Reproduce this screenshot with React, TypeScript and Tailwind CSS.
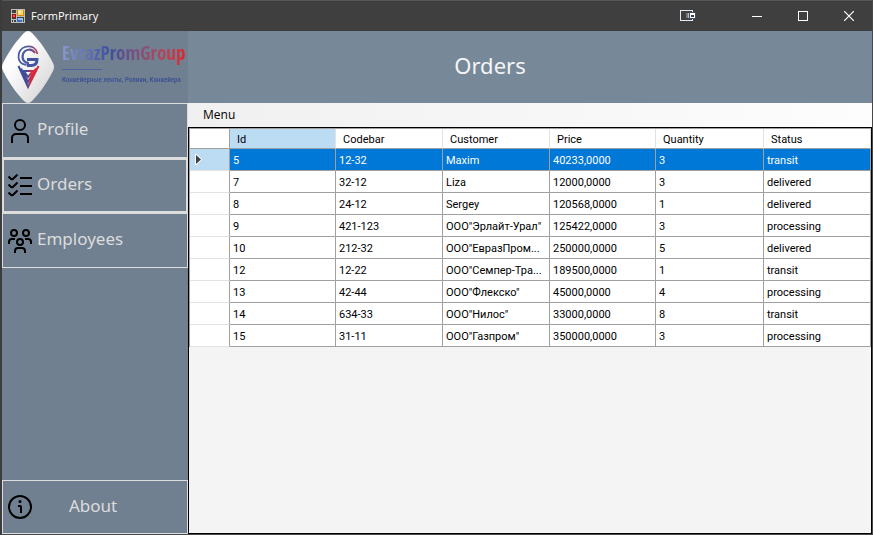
import type { ReactNode } from "react";

const columns = [
  { name: "Id", width: "w-[106px] bg-[#bcdcf4]" },
  { name: "Codebar", width: "w-[107px]" },
  { name: "Customer", width: "w-[107px]" },
  { name: "Price", width: "w-[106px]" },
  { name: "Quantity", width: "w-[108px]" },
  { name: "Status", width: "" },
];

const orders = [
  ["5", "12-32", "Maxim", "40233,0000", "3", "transit"],
  ["7", "32-12", "Liza", "12000,0000", "3", "delivered"],
  ["8", "24-12", "Sergey", "120568,0000", "1", "delivered"],
  ["9", "421-123", 'ООО"Эрлайт-Урал"', "125422,0000", "3", "processing"],
  ["10", "212-32", 'ООО"ЕвразПром...', "250000,0000", "5", "delivered"],
  ["12", "12-22", 'ООО"Семпер-Тра...', "189500,0000", "1", "transit"],
  ["13", "42-44", 'ООО"Флекско"', "45000,0000", "4", "processing"],
  ["14", "634-33", 'ООО"Нилос"', "33000,0000", "8", "transit"],
  ["15", "31-11", 'ООО"Газпром"', "350000,0000", "3", "processing"],
];

function LineIcon({ children }: { children: ReactNode }) {
  return (
    <svg viewBox="0 0 24 24" className="size-6 shrink-0" fill="none" stroke="#000" strokeWidth="2" aria-hidden="true">
      {children}
    </svg>
  );
}

function ProfileIcon() {
  return (
    <LineIcon>
      <circle cx="12" cy="6" r="5" />
      <path d="M4 24v-5a4 4 0 0 1 4-4h8a4 4 0 0 1 4 4v5" />
    </LineIcon>
  );
}

function ChecklistIcon() {
  return (
    <LineIcon>
      <path d="M12 4h12M12 12h12M12 20h12" />
      <path d="M.5 2.500l2.600 2.400q.9.700 1.800 0L9.500.5M.5 10.500l2.600 2.400q.9.700 1.800 0L9.500 8.500M.5 18.500l2.600 2.400q.9.700 1.800 0l4.600-4.400" />
    </LineIcon>
  );
}

function EmployeesIcon() {
  return (
    <LineIcon>
      <circle cx="6" cy="4" r="3" />
      <circle cx="18" cy="4" r="3" />
      <circle cx="12" cy="13" r="3" />
      <path d="M7 24v-2a3 3 0 0 1 3-3h4a3 3 0 0 1 3 3v2" />
      <path d="M1 15v-2a3 3 0 0 1 3-3h3M23 15v-2a3 3 0 0 0-3-3h-3" />
    </LineIcon>
  );
}

function InfoIcon() {
  return (
    <LineIcon>
      <circle cx="12" cy="12" r="11" />
      <path d="M10 11h2a1 1 0 0 1 1 1v6" />
      <circle cx="12" cy="6.500" r="1.500" fill="#000" stroke="none" />
    </LineIcon>
  );
}

function FormIcon() {
  return (
    <svg viewBox="0 0 14 14" className="size-[14px]" shapeRendering="crispEdges" aria-hidden="true">
      <path fill="#bdbdbd" d="M0 0h14v14H0z" />
      <path fill="#3f3f3f" d="M1 1h4v3H1zM1 9h4v1H1zM1 11h1v2H1zM3 11h2v2H3zM6 8h7v1H6zM12 9h1v4h-1z" />
      <path fill="#c98a1c" d="M6 1h7v6H6z" />
      <path fill="#ffd75e" d="M7 1h5v5H7z" />
      <path fill="#fff0a8" d="M7 2h3v2H7z" />
      <path fill="#a01010" d="M1 5h4v4H1z" />
      <path fill="#f0553c" d="M2 6h2v2H2z" />
      <path fill="#3a70c8" d="M6 9h5v4H6z" />
      <path fill="#8cc0ff" d="M7 9h4v2H7z" />
    </svg>
  );
}

function Emblem() {
  return (
    <svg viewBox="0 0 52 72" className="h-[72px] w-[52px] shrink-0" aria-hidden="true">
      <defs>
        <linearGradient id="plate" x1="0" y1="0" x2="1" y2="1">
          <stop offset=".35" stopColor="#fdfdfd" />
          <stop offset="1" stopColor="#cfcfd1" />
        </linearGradient>
        <linearGradient id="mark" gradientUnits="userSpaceOnUse" x1="16" y1="0" x2="38" y2="0">
          <stop offset=".4" stopColor="#3d4f9c" />
          <stop offset=".6" stopColor="#d8283a" />
        </linearGradient>
        <linearGradient id="arc" gradientUnits="userSpaceOnUse" x1="16" y1="0" x2="38" y2="0">
          <stop offset=".4" stopColor="#4a5ba4" />
          <stop offset="1" stopColor="#c33a55" />
        </linearGradient>
      </defs>
      <path
        fill="url(#plate)"
        d="M22 2q4-4 8 0C38 10 46 22 51 32q2 4 0 8C46 50 38 62 30 70q-4 4-8 0C14 62 6 50 1 40q-2-4 0-8C6 22 14 10 22 2z"
      />
      <g fill="none">
        <path stroke="url(#arc)" strokeWidth="1.800" d="M35.500 23C34 13 20 13 17 22c-1.500 7 1 11 7.500 12" />
        <path stroke="url(#arc)" strokeWidth="2.200" d="M33 22c-3-5-10-4-12 1-1.500 5 1 9 6 9" />
        <path stroke="#4054a0" strokeWidth="3" d="M25 28.500h10c0 4-2 6-6 6h-4" />
        <path
          stroke="url(#mark)"
          strokeWidth="2"
          d="M16.500 35l9.500 21L36.500 35M19 37.500l7 13.500 8-13.500M19 40h14M22.500 41l3.500 5 4-5"
        />
      </g>
    </svg>
  );
}

function Logo() {
  return (
    <div className="flex h-[72px] items-center overflow-hidden">
      <Emblem />
      <div className="mb-2 ml-2 flex flex-col blur-[0.5px]">
        <span className="bg-linear-to-r from-[#8a98cc] via-[#3f4d9c] via-40% to-[#e0202c] bg-clip-text font-['Open_Sans_Condensed','Roboto_Condensed',sans-serif] text-[19px] leading-6 font-bold text-transparent">
          EvrazPromGroup
        </span>
        <span className="mt-1 h-px w-10 bg-[#4d62a0]" />
        <span className="mt-1 font-['Roboto_Condensed','Roboto',sans-serif] text-[7px] leading-3 font-medium whitespace-nowrap text-[#3c4f94]">
          Конвейерные ленты, Ролики, Конвейера
        </span>
      </div>
    </div>
  );
}

function TitleBar() {
  return (
    <header className="flex h-[31px] items-center border-t border-[#565656] bg-[#3f3f3f] pl-[9px] font-['Open_Sans','Noto_Sans',sans-serif]">
      <FormIcon />
      <span className="ml-[6px] flex-1 text-[11px] text-white">FormPrimary</span>
      <button type="button" aria-label="Pin window" className="mr-[38px] flex h-full items-center">
        <svg viewBox="0 0 16 12" className="h-3 w-4" shapeRendering="crispEdges" aria-hidden="true">
          <path fill="none" stroke="#e8e8f4" d="M.5.5h12v10H.5z" />
          <path fill="#777" d="M6 3h2v5H6z" />
          <path fill="#bbb" d="M8 3h1v5H8z" />
          <path fill="#444a66" d="M9 2h7v7H9z" />
          <path fill="#fff" d="M10 3h5v5h-5z" />
          <path fill="#333a5c" d="M11 5h3v2h-3z" />
        </svg>
      </button>
      <button type="button" aria-label="Minimize" className="flex h-full w-[46px] items-center justify-center">
        <svg viewBox="0 0 10 10" className="size-[10px]" shapeRendering="crispEdges" aria-hidden="true">
          <path fill="#fff" d="M0 5h10v1H0z" />
        </svg>
      </button>
      <button type="button" aria-label="Maximize" className="flex h-full w-[46px] items-center justify-center">
        <svg viewBox="0 0 10 10" className="size-[10px]" shapeRendering="crispEdges" aria-hidden="true">
          <path fill="none" stroke="#fff" d="M.5.5h9v9h-9z" />
        </svg>
      </button>
      <button type="button" aria-label="Close" className="flex h-full w-[46px] items-center justify-center">
        <svg viewBox="0 0 10 10" className="size-[10px]" aria-hidden="true">
          <path stroke="#fff" strokeWidth="1.200" d="M0 0l10 10M10 0L0 10" />
        </svg>
      </button>
    </header>
  );
}

function Sidebar() {
  return (
    <aside className="flex w-[186px] shrink-0 flex-col bg-[#708090]">
      <Logo />
      <nav className="flex flex-1 flex-col text-[17px] leading-6 text-[#dcdcdc]">
        <button type="button" className="flex h-[55px] items-center gap-[5px] border border-[#dcdcdc] pl-[5px]">
          <ProfileIcon />
          <span className="pb-1">Profile</span>
        </button>
        <button type="button" aria-current="page" className="flex h-[55px] items-center gap-[5px] border-2 border-[#dcdcdc] pl-1">
          <ChecklistIcon />
          <span className="pb-1">Orders</span>
        </button>
        <button type="button" className="flex h-[55px] items-center gap-[5px] border border-[#dcdcdc] pl-[5px]">
          <EmployeesIcon />
          <span className="pb-1">Employees</span>
        </button>
        <button type="button" className="mt-auto flex h-[54px] items-center gap-[37px] border border-[#dcdcdc] pl-[5px]">
          <InfoIcon />
          <span className="pb-0.5">About</span>
        </button>
      </nav>
    </aside>
  );
}

function OrdersGrid() {
  return (
    <div className="flex-1 border border-black bg-[#f4f4f4]">
      <table className="w-full table-fixed border-separate border-spacing-0 border-t border-l border-[#a0a0a0] bg-white text-left font-['Roboto','Liberation_Sans',sans-serif] text-[11px] text-black">
        <thead>
          <tr className="h-5">
            <th className="w-10 border-r border-b border-r-[#a0a0a0] border-b-[#a0a0a0] p-0" />
            {columns.map(({ name, width }) => (
              <th
                key={name}
                className={`border-r border-b border-r-[#e2e2e2] border-b-[#a0a0a0] pt-0.5 pr-0 pb-0 pl-[7px] leading-4 font-normal ${width}`}
              >
                {name}
              </th>
            ))}
          </tr>
        </thead>
        <tbody>
          {orders.map((order, r) => (
            <tr key={order[0]} className={r === 0 ? "h-[22px] bg-[#0078d7] text-white" : "h-[22px]"}>
              <th
                className={`border-r border-b border-r-[#a0a0a0] border-b-[#e2e2e2] py-0 pr-0 pl-[5px] ${r === 0 ? "bg-[#bcdcf4]" : ""}`}
              >
                {r === 0 && (
                  <svg viewBox="0 0 7 11" className="block h-[11px] w-[7px]" aria-hidden="true">
                    <path fill="#fff" d="M0 0h1.500L7 5.500 1.500 11H0z" />
                    <path fill="#404040" d="M1 1l5 4.500L1 10z" />
                  </svg>
                )}
              </th>
              {order.map((value, c) => (
                <td key={columns[c].name} className="truncate border-r border-b border-[#a0a0a0] pt-0.5 pr-0 pb-0 pl-[3px] leading-4">
                  {value}
                </td>
              ))}
            </tr>
          ))}
        </tbody>
      </table>
    </div>
  );
}

export default function App() {
  return (
    <div className="flex min-h-screen flex-col border-r border-b border-l-2 border-[#484848] border-l-[#3c3c3c] font-['Noto_Sans',sans-serif]">
      <TitleBar />
      <div className="flex flex-1">
        <Sidebar />
        <main className="flex min-w-0 flex-1 flex-col">
          <div className="flex h-[72px] items-center justify-center bg-[#778899]">
            <h1 className="mr-20 pb-1 text-[22px] leading-8 text-[#f5f5f5]">Orders</h1>
          </div>
          <div className="flex h-6 items-center bg-linear-to-r from-[#f0f0f0] to-[#fdfdfd] font-['Open_Sans','Noto_Sans',sans-serif] text-xs text-black">
            <button type="button" className="h-full px-[15px]">
              Menu
            </button>
          </div>
          <OrdersGrid />
        </main>
      </div>
    </div>
  );
}
